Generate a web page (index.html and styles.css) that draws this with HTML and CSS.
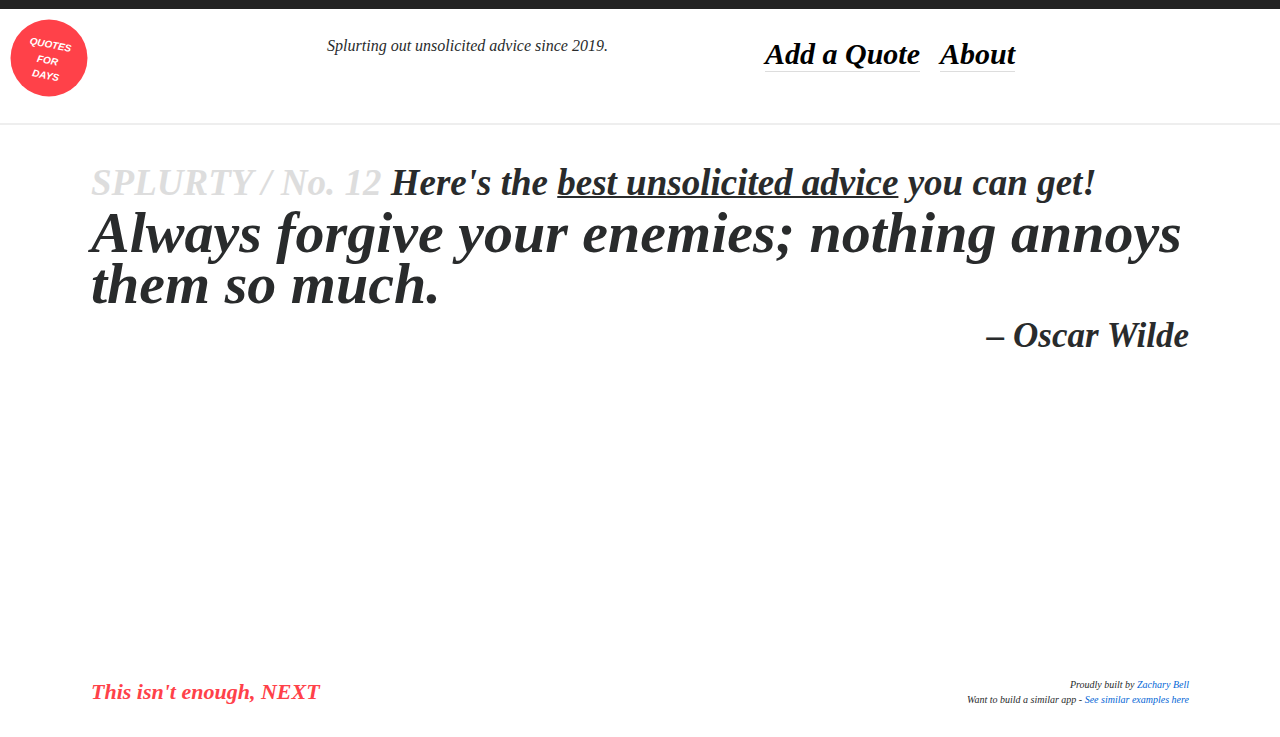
FILE: index.html
```html
<!DOCTYPE html>
<html lang="en">
<head>
<meta charset="utf-8">
<title>Splurty</title>
<link rel="stylesheet" href="styles.css">
</head>
<body>
<header class="site-header">
  <a class="logo" href="#" aria-label="Quotes for days">
    <svg class="logo-badge" viewBox="0 0 78 78" role="img" aria-hidden="true">
      <circle cx="39" cy="39" r="38.5" fill="#ff4149"/>
      <g class="logo-text" transform="rotate(11 39 39)">
        <text x="38" y="29">QUOTES</text>
        <text x="38" y="45">FOR</text>
        <text x="39" y="60">DAYS</text>
      </g>
    </svg>
  </a>
  <p class="tagline">Splurting out unsolicited advice since 2019.</p>
  <nav class="site-nav">
    <a class="nav-link" href="#">Add a Quote</a>
    <a class="nav-link" href="#">About</a>
  </nav>
</header>
<main class="content">
  <h1 class="headline"><span class="issue">SPLURTY / No. 12</span> Here's the <span class="emphasis">best unsolicited advice</span> you can get!</h1>
  <blockquote class="quote">Always forgive your enemies; nothing annoys them so much.</blockquote>
  <p class="author">– Oscar Wilde</p>
</main>
<footer class="site-footer">
  <a class="next" href="#">This isn't enough, NEXT</a>
  <div class="credits">
    <p class="credit">Proudly built by <a class="credit-link" href="#">Zachary Bell</a></p>
    <p class="credit">Want to build a similar app - <a class="credit-link" href="#">See similar examples here</a></p>
  </div>
</footer>
</body>
</html>
```
FILE: styles.css
```css
* {
  box-sizing: border-box;
}

body {
  display: flex;
  flex-direction: column;
  min-height: 100vh;
  margin: 0;
  border-top: 9px solid #222;
  background: #fff;
  color: #292b2c;
  font-family: "Liberation Serif", serif;
  font-style: italic;
}

p, h1, blockquote {
  margin: 0;
}

a {
  text-decoration: none;
}

.site-header {
  display: grid;
  grid-template-columns: 32fr 119fr 101fr;
  align-items: start;
  padding: 10px 10px 26px;
  border-bottom: 2px solid #eee;
}

.logo {
  width: 78px;
}

.logo-badge {
  display: block;
  width: 78px;
  height: 78px;
}

.logo-text {
  fill: #fff;
  font: italic 700 10px "Liberation Sans", sans-serif;
  text-anchor: middle;
}

.tagline {
  padding-top: 17px;
  font-size: 16px;
  line-height: 20px;
  text-align: center;
}

.site-nav {
  display: flex;
  gap: 20px;
  padding-top: 18px;
}

.nav-link {
  border-bottom: 1px solid #ddd;
  color: #000;
  font-size: 30px;
  font-weight: 700;
  line-height: 34px;
}

.content {
  flex: 1;
  padding: 35px 91px 0;
  font-weight: 700;
}

.headline {
  font-size: 37px;
  line-height: 45px;
}

.issue {
  color: #ddd;
}

.emphasis {
  text-decoration: underline;
  text-decoration-thickness: 2px;
  text-decoration-skip-ink: none;
}

.quote {
  padding-top: 2px;
  font-size: 58px;
  line-height: 51px;
}

.author {
  padding-top: 4px;
  font-size: 35px;
  line-height: 45px;
  text-align: right;
}

.site-footer {
  display: flex;
  justify-content: space-between;
  align-items: center;
  padding: 0 91px 30px;
}

.next {
  color: #ff4149;
  font-size: 22px;
  font-weight: 700;
}

.credits {
  text-align: right;
}

.credit {
  font-size: 10px;
  line-height: 15px;
}

.credit-link {
  color: #0366d6;
}
```
